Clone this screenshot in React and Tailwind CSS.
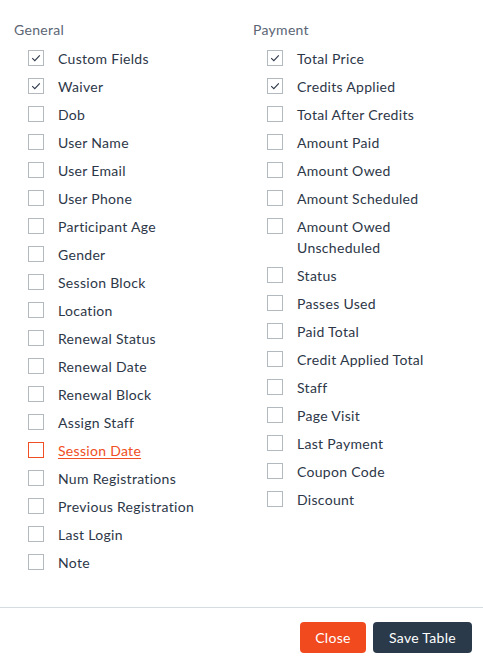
import React, { useState } from 'react';

const general = [
    'Custom Fields', 'Waiver', 'Dob', 'User Name', 'User Email', 'User Phone',
    'Participant Age', 'Gender', 'Session Block', 'Location', 'Renewal Status',
    'Renewal Date', 'Renewal Block', 'Assign Staff', 'Session Date',
    'Num Registrations', 'Previous Registration', 'Last Login', 'Note',
];

const payment = [
    'Total Price', 'Credits Applied', 'Total After Credits', 'Amount Paid',
    'Amount Owed', 'Amount Scheduled', 'Amount Owed Unscheduled', 'Status',
    'Passes Used', 'Paid Total', 'Credit Applied Total', 'Staff', 'Page Visit',
    'Last Payment', 'Coupon Code', 'Discount',
];

const CheckRow = ({ label, checked, focused, onToggle }) => (
    <label className="flex items-start gap-[14px] py-[3.5px] pl-[14px] cursor-pointer">
        <span
            className={`mt-[2.5px] w-4 h-4 shrink-0 flex items-center justify-center border bg-white ${
                focused ? 'border-[#f04e23]' : 'border-[#b3babf]'
            }`}
            onClick={onToggle}
        >
            {checked && (
                <svg width="12" height="12" viewBox="0 0 12 12" fill="none">
                    <path d="M2.2 6.2 L4.8 8.7 L9.8 3.3" stroke="#2d3748" strokeWidth="1.1" />
                </svg>
            )}
        </span>
        <span
            className={`leading-[21px] text-[14px] tracking-[0.3px] max-w-[150px] ${
                focused ? 'text-[#f04e23] underline underline-offset-2' : 'text-[#2d3748]'
            }`}
        >
            {label}
        </span>
    </label>
);

const App = () => {
    const [checked, setChecked] = useState({
        'Custom Fields': true,
        'Waiver': true,
        'Total Price': true,
        'Credits Applied': true,
    });

    const toggle = (name) => setChecked({ ...checked, [name]: !checked[name] });

    return (
        <div className="w-[483px] h-[662px] bg-white flex flex-col" style={{ fontFamily: 'Lato, "Open Sans", sans-serif' }}>
            <div className="flex-1 pt-[20px] px-[14px]">
                <div className="grid grid-cols-[239px_1fr]">
                    <div>
                        <div className="text-[14px] leading-[20px] tracking-[0.3px] text-[#5b6573] mb-[4px]">General</div>
                        {general.map((g) => (
                            <CheckRow
                                key={g}
                                label={g}
                                checked={!!checked[g]}
                                focused={g === 'Session Date'}
                                onToggle={() => toggle(g)}
                            />
                        ))}
                    </div>
                    <div>
                        <div className="text-[14px] leading-[20px] tracking-[0.3px] text-[#5b6573] mb-[4px]">Payment</div>
                        {payment.map((p) => (
                            <CheckRow
                                key={p}
                                label={p}
                                checked={!!checked[p]}
                                onToggle={() => toggle(p)}
                            />
                        ))}
                    </div>
                </div>
            </div>
            <div className="border-t border-[#d5dde3] flex justify-end gap-[7px] px-[11px] pt-[14px] pb-[9px]">
                <button className="h-[31px] w-[66px] rounded-[4px] bg-[#f04a1e] text-white text-[14px] tracking-[0.3px]">Close</button>
                <button className="h-[31px] w-[99px] rounded-[4px] bg-[#2b3a4a] text-white text-[14px] tracking-[0.3px]">Save Table</button>
            </div>
        </div>
    );
};

export default App;
